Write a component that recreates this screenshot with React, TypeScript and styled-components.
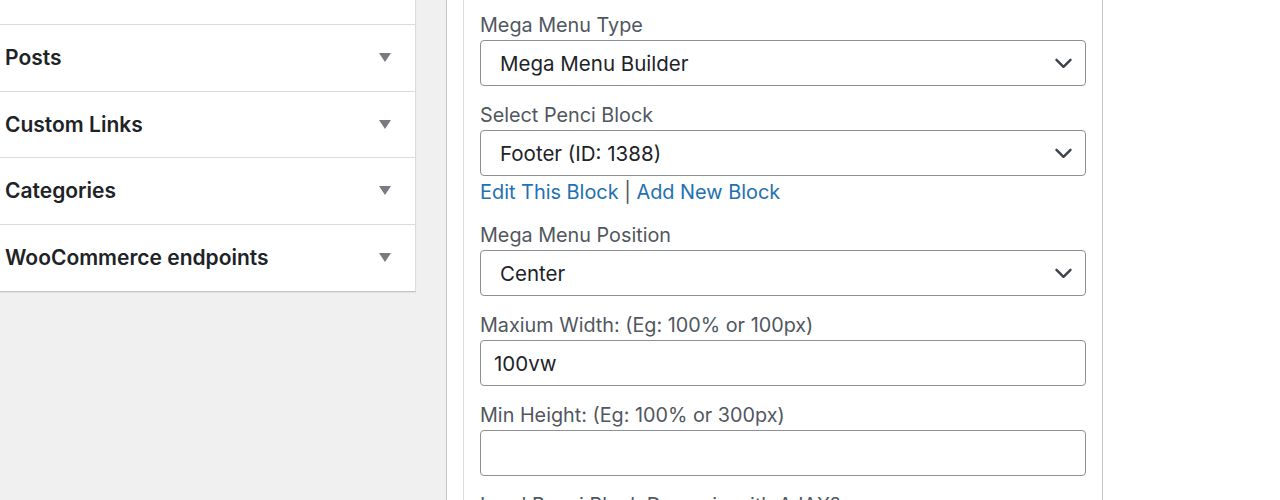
import React from "react";
import styled, { createGlobalStyle } from "styled-components";

const GlobalStyle = createGlobalStyle`
  * { box-sizing: border-box; }
  html, body {
    margin: 0;
    padding: 0;
    background: #f0f0f1;
    font-family: Inter, "Liberation Sans", Arial, sans-serif;
    color: #1d2327;
  }
`;

const Page = styled.div`
  display: flex;
  height: 500px;
  overflow: hidden;
  background: #f0f0f1;
`;

const LeftColumn = styled.div`
  width: 446px;
  flex-shrink: 0;
`;

const Accordion = styled.div`
  width: 416px;
  background: #fff;
  border-right: 1px solid #dcdcde;
  border-bottom: 1px solid #c3c4c7;
  box-shadow: 0 1px 1px rgba(0, 0, 0, 0.06);
`;

const TopStub = styled.div`
  height: 25px;
  border-bottom: 1px solid #dcdcde;
`;

const Section = styled.div<{ $last?: boolean }>`
  height: 66.5px;
  display: flex;
  align-items: center;
  justify-content: space-between;
  padding: 0 24px 0 5px;
  border-bottom: ${({ $last }) => ($last ? "none" : "1px solid #dcdcde")};
`;

const SectionTitle = styled.h3`
  margin: 0;
  font-size: 21px;
  font-weight: 600;
  color: #1d2327;
`;

const Arrow = styled.span`
  width: 0;
  height: 0;
  border-left: 6px solid transparent;
  border-right: 6px solid transparent;
  border-top: 9px solid #787c82;
`;

const RightArea = styled.div`
  flex: 1;
  background: #fff;
  border-left: 1px solid #c3c4c7;
  padding-left: 16px;
`;

const SettingsBox = styled.div`
  width: 640px;
  height: 100%;
  border-left: 1px solid #dcdcde;
  border-right: 1px solid #c3c4c7;
  padding: 13px 16px 0 16px;
`;

const Field = styled.div`
  margin-bottom: 17px;
`;

const Label = styled.label`
  display: block;
  font-size: 19.8px;
  line-height: 24px;
  color: #50575e;
  margin-bottom: 3px;
  white-space: nowrap;
`;

const SelectBox = styled.div`
  height: 46px;
  border: 1px solid #8c8f94;
  border-radius: 4px;
  display: flex;
  align-items: center;
  justify-content: space-between;
  padding: 0 13px 0 19px;
  font-size: 20.5px;
  color: #1d2327;
  background: #fff;
`;

const TextInput = styled.input`
  display: block;
  width: 100%;
  height: 46px;
  border: 1px solid #8c8f94;
  border-radius: 4px;
  padding: 0 13px;
  font-family: Inter, "Liberation Sans", Arial, sans-serif;
  font-size: 20.5px;
  color: #1d2327;
  background: #fff;
  outline: none;
`;

const Links = styled.div`
  margin-top: 4px;
  padding-bottom: 2px;
  line-height: 24px;
  font-size: 19.9px;
  color: #50575e;
`;

const Link = styled.a`
  color: #2271b1;
  text-decoration: none;
`;

const Chevron = () => (
  <svg width="17" height="11" viewBox="0 0 17 11" fill="none">
    <polyline
      points="1.5,1.8 8.5,8.8 15.5,1.8"
      stroke="#3c434a"
      strokeWidth="2.4"
      strokeLinecap="round"
      strokeLinejoin="round"
    />
  </svg>
);

const Select: React.FC<{ value: string }> = ({ value }) => (
  <SelectBox>
    <span>{value}</span>
    <Chevron />
  </SelectBox>
);

const sections = ["Posts", "Custom Links", "Categories", "WooCommerce endpoints"];

export default function App() {
  return (
    <>
      <GlobalStyle />
      <Page>
        <LeftColumn>
          <Accordion>
            <TopStub />
            {sections.map((s, i) => (
              <Section key={s} $last={i === sections.length - 1}>
                <SectionTitle>{s}</SectionTitle>
                <Arrow />
              </Section>
            ))}
          </Accordion>
        </LeftColumn>
        <RightArea>
          <SettingsBox>
            <Field>
              <Label>Mega Menu Type</Label>
              <Select value="Mega Menu Builder" />
            </Field>
            <Field>
              <Label>Select Penci Block</Label>
              <Select value="Footer (ID: 1388)" />
              <Links>
                <Link href="#">Edit This Block</Link> | <Link href="#">Add New Block</Link>
              </Links>
            </Field>
            <Field>
              <Label>Mega Menu Position</Label>
              <Select value="Center" />
            </Field>
            <Field>
              <Label>Maxium Width: (Eg: 100% or 100px)</Label>
              <TextInput defaultValue="100vw" />
            </Field>
            <Field>
              <Label>Min Height: (Eg: 100% or 300px)</Label>
              <TextInput defaultValue="" />
            </Field>
            <Field>
              <Label>Load Penci Block Dynamic with AJAX?</Label>
            </Field>
          </SettingsBox>
        </RightArea>
      </Page>
    </>
  );
}
